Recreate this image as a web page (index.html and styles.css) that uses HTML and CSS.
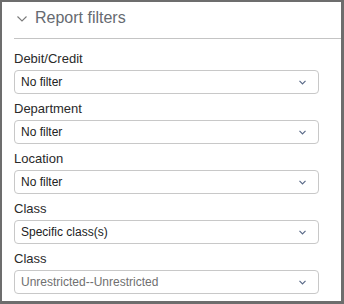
FILE: index.html
```html
<!DOCTYPE html>
<html lang="en">
<head>
    <meta charset="UTF-8">
    <title>Report filters</title>
    <link rel="stylesheet" href="styles.css">
</head>
<body>
<div class="panel">
    <div class="panel-head">
        <svg class="head-icon" width="10" height="6" viewBox="0 0 10 6"><path d="M0.5 0.5 L5 5 L9.5 0.5" fill="none" stroke="#7a7a7a" stroke-width="1.1"/></svg>
        <span class="head-title">Report filters</span>
    </div>
    <div class="fields">
        <div class="field">
            <div class="label">Debit/Credit</div>
            <div class="select"><span>No filter</span><svg class="caret" width="7" height="5" viewBox="0 0 7 5"><path d="M0.5 0.8 L3.5 3.8 L6.5 0.8" fill="none" stroke="#5a6a88" stroke-width="1.2"/></svg></div>
        </div>
        <div class="field">
            <div class="label">Department</div>
            <div class="select"><span>No filter</span><svg class="caret" width="7" height="5" viewBox="0 0 7 5"><path d="M0.5 0.8 L3.5 3.8 L6.5 0.8" fill="none" stroke="#5a6a88" stroke-width="1.2"/></svg></div>
        </div>
        <div class="field">
            <div class="label">Location</div>
            <div class="select"><span>No filter</span><svg class="caret" width="7" height="5" viewBox="0 0 7 5"><path d="M0.5 0.8 L3.5 3.8 L6.5 0.8" fill="none" stroke="#5a6a88" stroke-width="1.2"/></svg></div>
        </div>
        <div class="field">
            <div class="label">Class</div>
            <div class="select"><span>Specific class(s)</span><svg class="caret" width="7" height="5" viewBox="0 0 7 5"><path d="M0.5 0.8 L3.5 3.8 L6.5 0.8" fill="none" stroke="#5a6a88" stroke-width="1.2"/></svg></div>
        </div>
        <div class="field">
            <div class="label">Class</div>
            <div class="select muted"><span>Unrestricted--Unrestricted</span><svg class="caret" width="7" height="5" viewBox="0 0 7 5"><path d="M0.5 0.8 L3.5 3.8 L6.5 0.8" fill="none" stroke="#5a6a88" stroke-width="1.2"/></svg></div>
        </div>
    </div>
</div>
</body>
</html>
```

FILE: styles.css
```css
*{margin:0;padding:0;box-sizing:border-box;}

body{font-family:"Liberation Sans",Arial,sans-serif;background:#fff;}

.panel{
    width:344px;
    height:304px;
    border-style:solid;
    border-color:#6d6d6d;
    border-width:2px 3px 3px 2px;
    background:#fff;
}

.panel-head{
    margin-left:12px;
    height:37px;
    padding:7px 0 0 3px;
    border-bottom:1px solid #c4c4c4;
    display:flex;
    align-items:flex-start;
}
.head-icon{margin:7px 8px 0 0;}
.head-title{font-size:16px;line-height:18px;color:#666a70;}

.fields{padding:12px 22px 0 12px;}
.field{margin-bottom:7px;}
.label{font-size:13px;line-height:16px;color:#2a2a2a;margin-bottom:3px;}

.select{
    height:24px;
    border:1px solid #c8c8c8;
    border-radius:4px;
    padding:0 12px 0 6px;
    display:flex;
    align-items:center;
    justify-content:space-between;
    font-size:12px;
    line-height:22px;
    color:#222;
}
.select.muted{color:#707070;}
.caret{display:block;margin-top:1px;}
```
